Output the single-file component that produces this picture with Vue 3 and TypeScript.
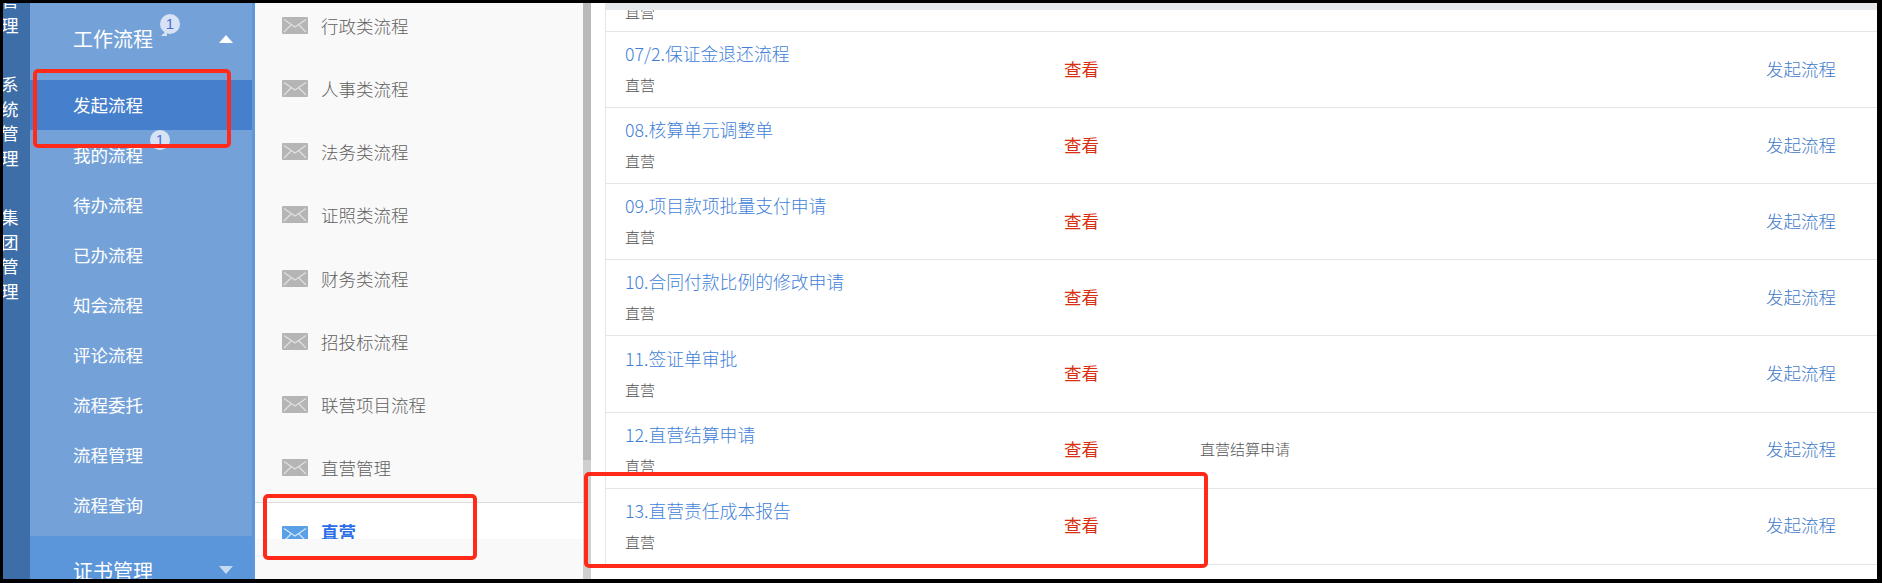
<script setup lang="ts">
interface Row {
  title: string
  note?: string
}

const railGroups: string[][] = [
  ['管', '理'],
  ['系', '统', '管', '理'],
  ['集', '团', '管', '理'],
]

const menuItems = ['发起流程', '我的流程', '待办流程', '已办流程', '知会流程', '评论流程', '流程委托', '流程管理', '流程查询']

const categories = ['行政类流程', '人事类流程', '法务类流程', '证照类流程', '财务类流程', '招投标流程', '联营项目流程', '直营管理']

const rows: Row[] = [
  { title: '07/2.保证金退还流程' },
  { title: '08.核算单元调整单' },
  { title: '09.项目款项批量支付申请' },
  { title: '10.合同付款比例的修改申请' },
  { title: '11.签证单审批' },
  { title: '12.直营结算申请', note: '直营结算申请' },
  { title: '13.直营责任成本报告' },
]
</script>

<template>
  <div class="frame">
    <nav class="rail">
      <div class="rail-inner">
        <div v-for="(group, i) in railGroups" :key="i" class="rail-group">
          <span v-for="(ch, j) in group" :key="j">{{ ch }}</span>
        </div>
      </div>
    </nav>

    <aside class="menu">
      <div class="menu-col">
        <div class="menu-head">
          <span>工作流程</span>
          <i class="tri tri-up"></i>
        </div>
        <a v-for="(item, i) in menuItems" :key="item" class="menu-item" :class="{ active: i === 0 }">{{ item }}</a>
        <div class="menu-head next">
          <span>证书管理</span>
          <i class="tri tri-down"></i>
        </div>
      </div>
      <div class="menu-strip"></div>
    </aside>

    <section class="cats">
      <div class="cats-list">
        <div class="cats-scroll">
          <div v-for="c in categories" :key="c" class="cat">
            <svg class="env" viewBox="0 0 26 17" width="26" height="17">
              <rect width="26" height="17" rx="1" fill="currentColor" />
              <path d="M2 2.5 13 10 24 2.5M2 15l7-7M24 15l-7-7" fill="none" stroke="#fff" stroke-opacity=".6" stroke-width="1.2" />
            </svg>
            <span>{{ c }}</span>
          </div>
          <div class="cat cat-active">
            <svg class="env" viewBox="0 0 26 17" width="26" height="17">
              <rect width="26" height="17" rx="1" fill="currentColor" />
              <path d="M2 2.5 13 10 24 2.5M2 15l7-7M24 15l-7-7" fill="none" stroke="#fff" stroke-opacity=".75" stroke-width="1.2" />
            </svg>
            <span class="cat-active-label">直营</span>
          </div>
        </div>
        <div class="cats-foot"></div>
      </div>
      <div class="scrollbar"><div class="thumb"></div></div>
    </section>

    <main class="content">
      <div class="table-wrap">
        <div class="table-head"></div>
        <div class="table-body">
          <div class="row first">
            <div class="row-text"><span class="sub">直营</span></div>
          </div>
          <div v-for="r in rows" :key="r.title" class="row">
            <div class="row-text">
              <a class="title">{{ r.title }}</a>
              <span class="sub">直营</span>
            </div>
            <a class="view">查看</a>
            <span class="note">{{ r.note }}</span>
            <a class="start">发起流程</a>
          </div>
        </div>
      </div>
    </main>

    <div class="bubble b1"><span>1</span></div>
    <div class="bubble b2"><span>1</span></div>
    <div class="mark m1"></div>
    <div class="mark m2"></div>
    <div class="mark m3"></div>
  </div>
</template>

<style>
html, body { margin: 0; padding: 0; background: #000; }
</style>

<style scoped>
.frame {
  position: relative;
  box-sizing: border-box;
  width: 1882px;
  height: 583px;
  display: flex;
  overflow: hidden;
  background: #fff;
  border-style: solid;
  border-color: #000;
  border-width: 3px 5px 4px 3px;
  font-family: "Noto Sans CJK SC", "Liberation Sans", sans-serif;
  font-weight: 300;
}
.rail {
  width: 27px;
  flex: none;
  overflow: hidden;
  background: #3d6ea8;
  color: #fff;
  font-weight: 400;
}
.rail-inner {
  margin: -15px 0 0 -2px;
  display: flex;
  flex-direction: column;
  gap: 35px;
}
.rail-group {
  display: flex;
  flex-direction: column;
  font-size: 17.5px;
  line-height: 24.5px;
}
.menu {
  width: 225px;
  flex: none;
  display: flex;
  overflow: hidden;
  background: #74a2d8;
  color: #fff;
  font-weight: 400;
}
.menu-col { width: 222px; flex: none; }
.menu-strip { flex: 1; background: #5f97dc; }
.menu-head {
  height: 71px;
  padding: 0 19px 0 43px;
  display: flex;
  align-items: center;
  justify-content: space-between;
  font-size: 20px;
  margin-bottom: 6px;
}
.menu-head.next {
  height: 68px;
  margin: 6px 0 0;
  background: #5b95da;
}
.tri {
  width: 0;
  height: 0;
  border-left: 7px solid transparent;
  border-right: 7px solid transparent;
}
.tri-up { border-bottom: 8px solid #fff; }
.tri-down { border-top: 8px solid #c6dbf2; }
.menu-item {
  display: block;
  height: 50px;
  line-height: 50px;
  padding-left: 43px;
  font-size: 17.5px;
}
.menu-item.active { background: #4680cc; }

.cats {
  width: 336px;
  flex: none;
  display: flex;
  background: #f9f9f9;
}
.cats-list {
  width: 328px;
  flex: none;
  display: flex;
  flex-direction: column;
}
.cats-scroll {
  height: 536px;
  flex: none;
  overflow: hidden;
}
.cats-foot { flex: 1; background: #f9f9f9; }
.cat {
  height: 63.25px;
  box-sizing: border-box;
  display: flex;
  align-items: center;
  gap: 13px;
  padding-left: 27px;
  color: #5f5f5f;
  font-size: 17.5px;
}
.cat:first-child { margin-top: -9.5px; }
.cat .env { color: #b5b5b5; flex: none; }
.cat-active {
  height: 63px;
  margin-top: 2.5px;
  border-top: 1px solid #dcdcdc;
  background: #fff;
  color: #2a6fe8;
  font-weight: 700;
}
.cat-active-label { margin-bottom: 5px; }
.cat-active .env { color: #5aa0e6; }
.scrollbar {
  flex: 1;
  background: #cfcfcf;
  height: 100%;
}
.thumb { height: 457px; background: #b9b9b9; }

.content {
  flex: 1;
  min-width: 0;
  padding-left: 14px;
  background: #fff;
}
.table-wrap {
  position: relative;
  height: 562px;
  overflow: hidden;
  box-sizing: border-box;
  border-left: 1px solid #e6e6e6;
}
.table-head {
  position: absolute;
  inset: 0 0 auto 0;
  height: 7px;
  background: #e4e8eb;
  z-index: 1;
}
.table-body { margin-top: -47px; }
.row {
  box-sizing: border-box;
  height: 76.1px;
  display: flex;
  align-items: center;
  padding-bottom: 3px;
  border-bottom: 1px solid #e6e6e6;
}
.row-text {
  width: 458px;
  flex: none;
  padding-left: 19px;
  box-sizing: border-box;
  display: flex;
  flex-direction: column;
}
.title {
  font-size: 17.8px;
  line-height: 31px;
  color: #3f7fd8;
}
.sub {
  margin-top: 3px;
  font-size: 15px;
  line-height: 26px;
  color: #555;
}
.view {
  width: 136px;
  flex: none;
  font-size: 17.5px;
  font-weight: 400;
  color: #d9300f;
}
.note {
  flex: 1;
  font-size: 15px;
  color: #555;
}
.start {
  flex: none;
  margin-right: 41px;
  font-size: 17.5px;
  color: #4178c8;
}
.first .row-text { padding-top: 43px; height: 100%; }
.first .sub { margin: 0; }

.bubble {
  position: absolute;
  width: 20px;
  height: 20px;
  border-radius: 50%;
  background: #d7e3f5;
  color: #4a70d8;
  font: 15px/20px "Liberation Sans", sans-serif;
  text-align: center;
}
.b1::after {
  content: "";
  position: absolute;
  left: 1px;
  bottom: -2px;
  width: 6px;
  height: 6px;
  background: #d7e3f5;
  clip-path: polygon(0 100%, 100% 0, 100% 100%);
}
.b1 { left: 157px; top: 11px; }
.b2 { left: 147px; top: 127px; }
.mark {
  position: absolute;
  box-sizing: border-box;
  border: 4px solid #ff2a1a;
  border-radius: 5px;
}
.m1 { left: 30px; top: 66px; width: 198px; height: 79px; }
.m2 { left: 260px; top: 491px; width: 214px; height: 66px; }
.m3 { left: 581px; top: 469px; width: 624px; height: 96px; }
</style>
